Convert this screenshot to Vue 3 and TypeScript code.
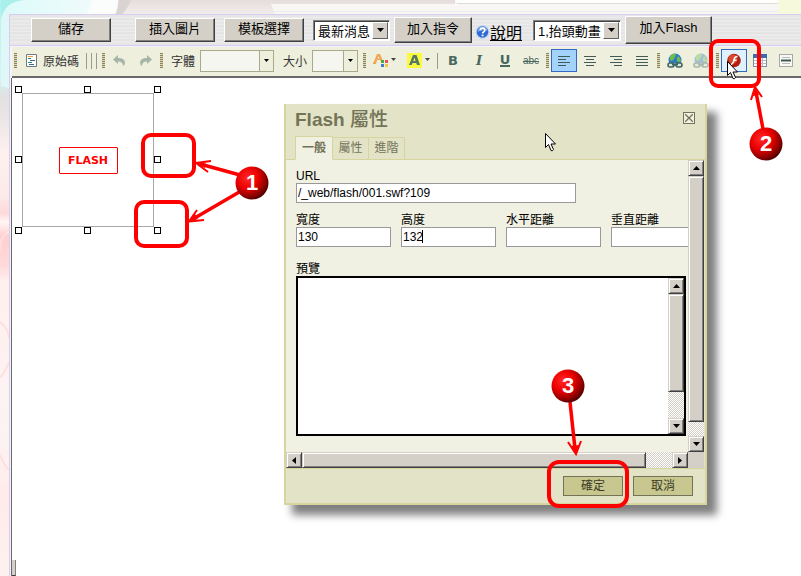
<script setup lang="ts">
import { ref } from 'vue'

const news = ref('最新消息')
const banner = ref('1,抬頭動畫')
const font = ref('')
const size = ref('')
const url = ref('/_web/flash/001.swf?109')
const tab = ref('一般')
const tabs: string[] = ['一般', '屬性', '進階']

interface Measure { id: string; label: string; value: string; caret?: boolean }
const measures = ref<Measure[]>([
  { id: 'width', label: '寬度', value: '130' },
  { id: 'height', label: '高度', value: '132', caret: true },
  { id: 'hspace', label: '水平距離', value: '' },
  { id: 'vspace', label: '垂直距離', value: '' },
])

interface AlignTool { name: string; d: string }
const aligns: AlignTool[] = [
  { name: '靠左對齊', d: 'M0 .5H12M0 3.5H8M0 6.5H12M0 9.5H8' },
  { name: '置中', d: 'M0 .5H12M2 3.5H10M0 6.5H12M2 9.5H10' },
  { name: '靠右對齊', d: 'M0 .5H12M4 3.5H12M0 6.5H12M4 9.5H12' },
  { name: '左右對齊', d: 'M0 .5H12M0 3.5H12M0 6.5H12M0 9.5H12' },
]

const handles: string[] = ['nw', 'n', 'ne', 'w', 'e', 'sw', 's', 'se']

interface Ball { n: number; x: number; y: number }
const balls: Ball[] = [
  { n: 1, x: 252, y: 183 },
  { n: 2, x: 766, y: 144 },
  { n: 3, x: 568, y: 386 },
]
</script>

<template>
  <div class="page">
    <svg class="backdrop" width="801" height="576" aria-hidden="true">
      <defs>
        <linearGradient id="aqua" x1="0" x2="1" y1="0" y2="0">
          <stop offset="0" stop-color="#dcfbf9" />
          <stop offset="1" stop-color="#f4fbfb" />
        </linearGradient>
        <linearGradient id="side" x1="0" x2="0" y1="0" y2="1">
          <stop offset="0" stop-color="#b4f2f0" />
          <stop offset=".13" stop-color="#cff5f4" />
          <stop offset=".17" stop-color="#e3e0e0" />
          <stop offset=".22" stop-color="#efe9e8" />
          <stop offset=".26" stop-color="#fdf0ef" />
          <stop offset=".34" stop-color="#fdeaea" />
          <stop offset=".37" stop-color="#ffd9d9" />
          <stop offset=".385" stop-color="#fff6f5" />
          <stop offset=".41" stop-color="#ffd0d0" />
          <stop offset=".46" stop-color="#ffd9d9" />
          <stop offset=".49" stop-color="#fff0ef" />
          <stop offset=".75" stop-color="#fbf4f3" />
          <stop offset=".86" stop-color="#ffebe9" />
          <stop offset="1" stop-color="#fdf1ef" />
        </linearGradient>
        <linearGradient id="rose" x1="0" x2="0" y1="0" y2="1">
          <stop offset="0" stop-color="#e5dddc" />
          <stop offset="1" stop-color="#f2eeec" />
        </linearGradient>
      </defs>
      <rect width="12" height="576" fill="url(#side)" />
      <rect x="9" width="792" height="15" fill="url(#rose)" />
      <path d="M0 0H24Q9 3 5 9Q2 14 1 20V0Z" fill="#a9f0ec" />
      <path d="M24 0H114L109 15H3Q6 2 24 0Z" fill="url(#aqua)" />
      <path d="M1 20Q2 12 9 7V88Q4 86 1 86Z" fill="#dff8f7" />
      <path d="M92 0H118Q118 9 115 15H85Q91 8 92 0Z" fill="#fbfcfc" />
      <path d="M119 0H131Q127 10 121 15H115Q118 9 119 0Z" fill="#d9d4d2" />
      <path d="M271 4L275 15H801V0H455V4Z" fill="#f8f7f5" />
      <path d="M455 0H778V3H457Z" fill="#fdfdfc" />
      <path d="M457 3.500H778" stroke="#dedddb" />
      <path d="M274 11.500H778" stroke="#ecebe9" />
      <rect x="778" width="23" height="15" fill="#f6f9dc" />
      <path d="M9 232Q0 236 0 250M0 322Q9 329 9 338M9 362Q4 375 0 377M0 455Q4 465 9 470" fill="none" stroke="#ffdedd" stroke-width="2" />
    </svg>

    <main class="shell">
      <div class="actions">
        <button type="button" class="raised save">儲存</button>
        <button type="button" class="raised">插入圖片</button>
        <button type="button" class="raised">模板選擇</button>
        <span class="drop short">
          <select v-model="news" aria-label="指令"><option>最新消息</option></select>
          <span class="drop-arrow"><svg width="7" height="4"><path d="M0 0H7L3.500 4Z" /></svg></span>
        </span>
        <button type="button" class="raised lead">加入指令</button>
        <a href="#help" class="help">
          <svg width="15" height="16" viewBox="0 0 15 16">
            <circle cx="7.500" cy="8" r="7" fill="#c4d6f3" />
            <circle cx="7.500" cy="8" r="5.800" fill="#2f6bd0" />
            <path d="M2.500 8A5 5 0 0 1 12.500 7Q8 5 2.500 8Z" fill="#75a4ea" />
            <path d="M5.300 6.300Q5.300 4.200 7.600 4.200Q9.800 4.200 9.800 6.100Q9.800 7.300 8.500 8Q7.600 8.500 7.600 9.600" fill="none" stroke="#fff" stroke-width="1.700" />
            <rect x="6.700" y="10.600" width="1.800" height="1.700" fill="#fff" />
          </svg><span>說明</span>
        </a>
        <span class="drop long">
          <select v-model="banner" aria-label="動畫"><option>1,抬頭動畫</option></select>
          <span class="drop-arrow"><svg width="7" height="4"><path d="M0 0H7L3.500 4Z" /></svg></span>
        </span>
        <button type="button" class="raised lead flash-add">加入Flash</button>
      </div>

      <div class="toolbar" role="toolbar" aria-label="編輯工具">
        <i class="grip first"></i>
        <button type="button" class="tool source">
          <svg width="11" height="13" viewBox="0 0 11 13">
            <path d="M.5.500H10.500V12.500H.5Z" fill="#fff" stroke="#6f7a80" />
            <path d="M2 2.500H7" stroke="#f0a030" />
            <path d="M2 4.500H5M2 8.500H6" stroke="#2f7f80" />
            <path d="M4 6.500H9M3 10.500H8" stroke="#3c6f86" />
          </svg>
          <span>原始碼</span>
        </button>
        <i class="bar"></i><i class="bar"></i><i class="bar"></i>
        <i class="grip tight"></i>
        <button type="button" class="tool" aria-label="復原">
          <svg width="13" height="11" viewBox="0 0 13 11"><path d="M0 4.500L5 0V3Q12 3 12 8Q12 10 10 11Q10 6.500 5 6.500V9Z" fill="#a7b5a8" /></svg>
        </button>
        <button type="button" class="tool" aria-label="重做">
          <svg width="13" height="11" viewBox="0 0 13 11"><path d="M13 4.500L8 0V3Q1 3 1 8Q1 10 3 11Q3 6.500 8 6.500V9Z" fill="#a7b5a8" /></svg>
        </button>
        <i class="grip"></i>
        <label class="caption" for="font">字體</label>
        <span class="pick wide">
          <select id="font" v-model="font"><option value=""></option></select>
          <span class="pick-arrow"><svg width="5" height="3"><path d="M0 0H5L2.500 3Z" /></svg></span>
        </span>
        <label class="caption" for="size">大小</label>
        <span class="pick">
          <select id="size" v-model="size"><option value=""></option></select>
          <span class="pick-arrow"><svg width="5" height="3"><path d="M0 0H5L2.500 3Z" /></svg></span>
        </span>
        <i class="grip"></i>
        <button type="button" class="tool colour" aria-label="文字顏色">
          <svg width="24" height="16" viewBox="0 0 24 16">
            <path d="M0 11L4 1H7L10 8H7.500L7 7H4L3 11ZM4.700 5.500H6.500L5.500 3Z" fill="#f2a552" fill-rule="evenodd" />
            <path d="M0 9H3V11H0Z" fill="#f2a552" />
            <rect x="8" y="7" width="3" height="3" fill="#3fae49" /><rect x="12" y="7" width="3" height="3" fill="#ef5350" />
            <rect x="8" y="11" width="3" height="3" fill="#3d7de0" /><rect x="12" y="11" width="3" height="3" fill="#f4c445" />
            <path d="M18 5H23L20.500 8Z" fill="#444" />
          </svg>
        </button>
        <button type="button" class="tool colour" aria-label="背景顏色">
          <svg width="24" height="16" viewBox="0 0 24 16">
            <rect width="15" height="15" fill="#fbfb3d" />
            <path d="M2 12L6 2H9.500L13 12H10L9.200 10H5.500L4.800 12ZM6.200 8H8.600L7.500 4.600Z" fill="#56756b" fill-rule="evenodd" />
            <path d="M18 5H23L20.500 8Z" fill="#444" />
          </svg>
        </button>
        <i class="bar solo"></i>
        <button type="button" class="tool glyph"><b>B</b></button>
        <button type="button" class="tool glyph italic"><b>I</b></button>
        <button type="button" class="tool glyph under"><b>U</b></button>
        <button type="button" class="tool strike"><s>abc</s></button>
        <i class="grip"></i>
        <button v-for="(a, i) in aligns" :key="a.name" type="button" class="tool" :class="{ on: i === 0 }" :aria-label="a.name">
          <svg width="12" height="10" viewBox="0 0 12 10"><path :d="a.d" stroke="#3f5a57" /></svg>
        </button>
        <i class="grip"></i>
        <button v-for="k in ['插入連結', '移除連結']" :key="k" type="button" class="tool" :class="{ dim: k === '移除連結' }" :aria-label="k">
          <svg width="16" height="16" viewBox="0 0 16 16">
            <circle cx="8" cy="7" r="6.500" fill="#2f78c8" />
            <path d="M5 1Q9 0 9 3Q7 4 7 6Q5 9 3 7Q2 4 5 1ZM11 3Q14 5 14 8Q12 10 10 8Q9 5 11 3Z" fill="#6cc04a" />
            <path d="M0 10H16V15H0Z" fill="#eeeedd" />
            <rect x="1" y="10" width="6" height="4" rx="2" fill="#dce5dc" stroke="#3f6660" stroke-width="1.600" />
            <rect x="9" y="10" width="6" height="4" rx="2" fill="#dce5dc" stroke="#3f6660" stroke-width="1.600" />
            <path d="M5 11.500H11" stroke="#3f6660" stroke-width="2" />
          </svg>
        </button>
        <i class="grip"></i>
        <button type="button" class="tool hot" aria-label="插入 Flash">
          <svg width="16" height="16" viewBox="0 0 16 16">
            <circle cx="8" cy="7.500" r="6.800" fill="#b01f12" /><circle cx="7" cy="6" r="4.500" fill="#dc4a2e" />
            <path d="M11.500 3.500Q8.500 3.500 8 7Q7.500 10.500 5 11.500M7 7.300H10.500" fill="none" stroke="#fff" stroke-width="1.500" />
          </svg>
        </button>
        <button type="button" class="tool" aria-label="插入表格">
          <svg width="14" height="13" viewBox="0 0 14 13">
            <rect x=".5" y=".5" width="13" height="12" fill="#fff" stroke="#7f8da0" /><rect width="14" height="4" fill="#3d6cae" />
            <path d="M1 6.500H13M1 9.500H13M4.500 4V12M9.500 4V12" stroke="#b4bcc8" />
          </svg>
        </button>
        <button type="button" class="tool" aria-label="插入水平線">
          <svg width="14" height="13" viewBox="0 0 14 13">
            <rect x=".5" y=".5" width="13" height="12" fill="#f8f8f4" stroke="#a5aaa5" />
            <path d="M3 3.500H11M3 9.500H11" stroke="#bbb" /><path d="M2 6.500H12" stroke="#3f5a57" stroke-width="2" />
          </svg>
        </button>
      </div>

      <section class="canvas" aria-label="編輯區">
        <div class="flash-object">
          <span class="flash-tag">FLASH</span>
          <i v-for="h in handles" :key="h" class="handle" :class="h"></i>
        </div>
        <i class="scroll-stub"></i>
      </section>
    </main>

    <form class="dialog" role="dialog" aria-labelledby="dialog-title" @submit.prevent>
      <header class="dialog-head">
        <div class="title-row">
          <h1 id="dialog-title">Flash <span>屬性</span></h1>
          <button type="button" class="close" aria-label="關閉">
            <svg width="8" height="8" viewBox="0 0 8 8"><path d="M0 0L8 8M8 0L0 8" stroke="#737357" stroke-width="1.300" /></svg>
          </button>
        </div>
        <nav class="tabs">
          <button v-for="t in tabs" :key="t" type="button" :class="{ current: tab === t }" @click="tab = t">{{ t }}</button>
        </nav>
      </header>

      <div class="frame">
        <div class="fields">
          <div class="field url">
            <label for="url">URL</label>
            <input id="url" v-model="url" type="text" />
          </div>
          <div class="measures">
            <div v-for="m in measures" :key="m.id" class="field" :class="{ caret: m.caret }">
              <label :for="m.id">{{ m.label }}</label>
              <input :id="m.id" v-model="m.value" type="text" />
            </div>
          </div>
          <div class="preview-label">預覽</div>
          <div class="preview">
            <div class="vscroll inner">
              <span class="cap"><svg width="7" height="4"><path d="M0 4H7L3.500 0Z" /></svg></span>
              <span class="thumb"></span>
              <span class="track"></span>
              <span class="cap"><svg width="7" height="4"><path d="M0 0H7L3.500 4Z" /></svg></span>
            </div>
          </div>
        </div>
        <div class="vscroll outer">
          <span class="cap"><svg width="7" height="4"><path d="M0 4H7L3.500 0Z" /></svg></span>
          <span class="thumb"></span>
          <span class="track"></span>
          <span class="cap"><svg width="7" height="4"><path d="M0 0H7L3.500 4Z" /></svg></span>
        </div>
        <div class="hscroll">
          <span class="cap"><svg width="4" height="7"><path d="M4 0V7L0 3.500Z" /></svg></span>
          <span class="thumb"></span>
          <span class="track"></span>
          <span class="cap"><svg width="4" height="7"><path d="M0 0V7L4 3.500Z" /></svg></span>
        </div>
        <div class="corner"></div>
      </div>

      <footer class="dialog-foot">
        <button type="submit">確定</button>
        <button type="button">取消</button>
      </footer>
    </form>

    <svg class="notes" width="801" height="576">
      <defs>
        <radialGradient id="ball" cx=".36" cy=".34" r=".7">
          <stop offset="0" stop-color="#ff2a2a" />
          <stop offset=".45" stop-color="#ee0000" />
          <stop offset=".75" stop-color="#a00000" />
          <stop offset="1" stop-color="#500000" />
        </radialGradient>
        <path id="pointer" d="M.5.500V14.500L3.500 11.500L6 17.500Q7.500 18.500 8.500 16.500L6 11H10.500Z" fill="#fff" stroke="#000" />
      </defs>
      <use href="#pointer" x="545" y="133" />
      <use href="#pointer" x="727" y="61" />
      <g fill="none" stroke="#f00" stroke-width="4">
        <rect x="143" y="135" width="51" height="41" rx="8" />
        <rect x="136" y="202" width="51" height="44" rx="8" />
        <rect x="711" y="41" width="48" height="45" rx="7" />
        <rect x="549" y="462" width="78" height="44" rx="10" />
        <path d="M240 175L200 164M241 191L193 219" stroke-width="3.500" />
        <path d="M763 129L756 92M570 402L575 449" stroke-width="3.500" />
        <path d="M211 161L196 163L208 172M197 210L189 221.500L204 220" stroke-width="2" />
        <path d="M751 100L755 87L762 97M568 442L576 454L581 441" stroke-width="2" />
      </g>
      <path d="M196 163L206 163.500L205 168ZM189 221.500L195 214L198 219ZM755 87L753 96L759 95ZM576 454L571 446L579 445Z" fill="#f00" />
      <g v-for="b in balls" :key="b.n">
        <circle :cx="b.x" :cy="b.y" r="16.500" fill="url(#ball)" />
        <text :x="b.x" :y="b.y + 7" text-anchor="middle">{{ b.n }}</text>
      </g>
    </svg>
  </div>
</template>

<style>
body { background: #fff; }
</style>

<style scoped>
* { box-sizing: border-box; }
.page {
  position: relative;
  min-height: 100vh;
  display: flex;
  flex-direction: column;
  overflow: hidden;
  padding: 14px 0 0 9px;
  font-family: "Liberation Sans", "Noto Sans CJK TC", sans-serif;
  font-size: 12px;
  color: #000;
}
button, input, select { font: inherit; color: inherit; margin: 0; border-radius: 0; }
svg { display: block; flex: none; }
.backdrop { position: absolute; left: 0; top: 0; }
.notes { position: absolute; left: 0; top: 0; pointer-events: none; }
.notes text { font-size: 22px; font-weight: bold; fill: #fff; }

.shell {
  position: relative;
  flex: 1;
  display: flex;
  flex-direction: column;
  border-left: 1px solid #d8ccf0;
  border-top: 1px solid #d8ccf0;
  background: #f4f2fa;
}
.actions {
  display: flex;
  align-items: center;
  height: 31px;
  padding-left: 21px;
  border-bottom: 1px solid #d8ccf0;
  background: repeating-linear-gradient(#e6e6e6 0 2px, #ececec 2px 3px, #e4e4e4 3px 5px, #eaeaea 5px 7px);
  white-space: nowrap;
}
.raised {
  height: 24px;
  padding: 0 0 3px;
  width: 80px;
  margin-right: 9px;
  flex: none;
  border: 1px solid;
  border-color: #fff #404040 #404040 #fff;
  box-shadow: inset -1px -1px #808080;
  background: #d4d0c8;
  font-size: 13px;
  line-height: 18px;
}
.raised.save { margin-right: 24px; }
.raised.lead { width: 78px; margin-right: 3px; height: 26px; }
.raised.flash-add { width: 87px; height: 28px; padding-bottom: 4px; }
.drop {
  position: relative;
  flex: none;
  height: 21px;
  margin-right: 4px;
  border: 1px solid;
  border-color: #808080 #fff #fff #808080;
  box-shadow: inset 1px 1px #404040;
  background: #fff;
}
.drop.short { width: 77px; }
.drop.long { width: 88px; }
.drop select {
  appearance: none;
  width: 100%;
  height: 100%;
  padding: 3px 16px 0 4px;
  border: 0;
  background: transparent;
  font-size: 13px;
}
.drop-arrow {
  position: absolute;
  right: 1px;
  top: 1px;
  bottom: 1px;
  width: 16px;
  display: grid;
  place-items: center;
  border: 1px solid;
  border-color: #fff #606060 #606060 #fff;
  background: #d4d0c8;
  pointer-events: none;
}
.help {
  display: flex;
  align-items: center;
  width: 58px;
  flex: none;
  padding-top: 4px;
  color: #000;
  font-size: 16px;
  line-height: 20px;
  text-decoration: none;
}
.help span { padding-top: 3px; text-decoration: underline; }

.toolbar {
  display: flex;
  align-items: center;
  height: 31px;
  margin: 1px 0 0 2px;
  padding-bottom: 2px;
  border-bottom: 2px solid #696969;
  background: #efefde;
  color: #333;
  white-space: nowrap;
}
.toolbar > * { flex: none; }
.grip {
  width: 3px;
  height: 15px;
  margin: 0 2px;
  background: repeating-linear-gradient(#8b8460 0 1px, #d9d5b4 1px 2px);
}
.grip.first { margin: 0 8px 0 2px; }
.grip.tight { margin: 0 1px; }
.tool {
  display: flex;
  align-items: center;
  justify-content: center;
  width: 26px;
  height: 23px;
  padding: 0;
  border: 1px solid transparent;
  background: transparent;
}
.tool.source { width: 61px; gap: 6px; justify-content: flex-start; }
.tool.colour { width: 34px; }
.tool.on { border-color: #316ac5; background: #a3d2fb; }
.tool.hot { border-color: #316ac5; background: #dff1ff; }
.tool.dim svg { opacity: .4; }
.bar { width: 1px; height: 16px; margin-right: 4px; background: #9b9b8a; }
.bar.solo { margin: 0 2px 0 1px; }
.caption { width: 35px; padding-left: 6px; }
.pick {
  position: relative;
  width: 46px;
  height: 22px;
  margin-right: 3px;
  border: 1px solid #a9a98b;
  background: #f6f6f1;
}
.pick.wide { width: 74px; }
.pick select { appearance: none; width: 100%; height: 100%; border: 0; background: transparent; }
.pick-arrow {
  position: absolute;
  right: 0;
  top: 0;
  bottom: 0;
  width: 14px;
  display: grid;
  place-items: center;
  border-left: 1px solid #a9a98b;
  background: #efefde;
  pointer-events: none;
}
.glyph, .strike { color: #48685f; }
.glyph { font-family: "DejaVu Sans", sans-serif; font-size: 13px; line-height: 15px; }
.glyph.italic { font-family: "DejaVu Serif", serif; font-style: italic; }
.glyph.under b { border-bottom: 2px solid; line-height: 11px; }
.strike { font-size: 10px; }

.canvas {
  position: relative;
  flex: 1;
  margin-left: 1px;
  border-left: 1px solid #696969;
  background: #fff;
}
.flash-object {
  position: absolute;
  left: 10px;
  top: 15px;
  width: 132px;
  height: 134px;
  display: grid;
  place-items: center;
  border: 1px solid #a9a9a9;
}
.flash-tag {
  width: 59px;
  height: 27px;
  border: 1px solid #f00;
  border-radius: 1px;
  color: #f00;
  font: bold 11px/25px "DejaVu Sans", sans-serif;
  text-align: center;
}
.handle { position: absolute; width: 7px; height: 7px; border: 1px solid #000; background: #fff; }
.nw, .w, .sw { left: -8px; }
.n, .s { left: 61px; }
.ne, .e, .se { right: -8px; }
.nw, .n, .ne { top: -8px; }
.w, .e { top: 62px; }
.sw, .s, .se { bottom: -8px; }
.scroll-stub {
  position: absolute;
  left: 0;
  bottom: 0;
  width: 4px;
  height: 16px;
  border-bottom: 1px solid #404040;
  border-right: 1px solid #808080;
  background: #d4d0c8;
}

.dialog {
  position: absolute;
  left: 284px;
  top: 104px;
  width: 423px;
  border: 2px solid #d5d59d;
  border-top: 0;
  background: #e3e3c7;
  box-shadow: 9px 9px 8px 1px #808080;
}
.dialog-head { border-bottom: 1px solid #d5d59d; }
.title-row { display: flex; justify-content: space-between; height: 33px; padding: 3px 10px 0 9px; }
h1 { margin: 0; font-size: 19px; line-height: 25px; color: #737357; }
h1 span { font-weight: 500; }
.close {
  display: grid;
  place-items: center;
  width: 12px;
  height: 12px;
  margin-top: 5px;
  padding: 0;
  border: 1px solid #737357;
  background: #f1f1e3;
}
.tabs { display: flex; align-items: flex-end; height: 23px; padding-left: 9px; margin-bottom: -1px; }
.tabs button {
  width: 36px;
  height: 23px;
  padding: 0;
  border: 1px solid #d5d59d;
  border-left-width: 0;
  background: #e3e3c7;
  color: #737357;
  line-height: 21px;
}
.tabs .current {
  width: 38px;
  height: 24px;
  border-left-width: 1px;
  border-bottom-color: #f1f1e3;
  background: #f1f1e3;
  font-weight: bold;
}
.frame {
  display: grid;
  grid-template-columns: minmax(0, 1fr) 16px;
  background: #f1f1e3;
  margin-right: 1px;
}
.fields { overflow: hidden; height: 292px; padding: 9px 0 0 10px; }
.field { display: flex; flex-direction: column; width: 95px; flex: none; line-height: 14px; }
.field.url { width: 280px; }
.field input {
  width: 100%;
  height: 20px;
  padding: 0 1px;
  border: 1px solid #999;
  background: #fff;
}
.measures { display: flex; gap: 10px; margin-top: 10px; }
.field.caret { position: relative; }
.field.caret::after { content: ""; position: absolute; left: 21px; bottom: 4px; width: 1px; height: 13px; background: #000; }
.preview-label { margin-top: 15px; line-height: 14px; }
.preview {
  display: flex;
  justify-content: flex-end;
  width: 390px;
  height: 160px;
  border: 2px solid #000;
  background: #fff;
}
.vscroll, .hscroll {
  display: flex;
  background: repeating-conic-gradient(#d4d0c8 0 25%, #fff 0 50%) 0 0 / 2px 2px;
}
.vscroll { flex-direction: column; width: 16px; }
.hscroll { height: 16px; }
.cap, .thumb {
  border: 1px solid;
  border-color: #d4d0c8 #404040 #404040 #d4d0c8;
  box-shadow: inset 1px 1px #fff, inset -1px -1px #808080;
  background: #d4d0c8;
}
.cap { flex: none; width: 16px; height: 16px; display: grid; place-items: center; }
.inner .thumb { flex: 98; }
.inner .track { flex: 26; }
.outer .thumb { flex: 246; }
.outer .track { flex: 14; }
.hscroll .thumb { flex: 344; }
.hscroll .track { flex: 26; }
.corner { background: #d4d0c8; }
.dialog-foot {
  display: flex;
  justify-content: flex-end;
  gap: 10px;
  padding: 7px 12px;
  border-top: 1px solid #d5d59d;
}
.dialog-foot button {
  width: 60px;
  height: 20px;
  padding: 0;
  border: 1px solid #737357;
  background: #c7c78f;
  color: #3b3b1f;
  line-height: 16px;
}
</style>
